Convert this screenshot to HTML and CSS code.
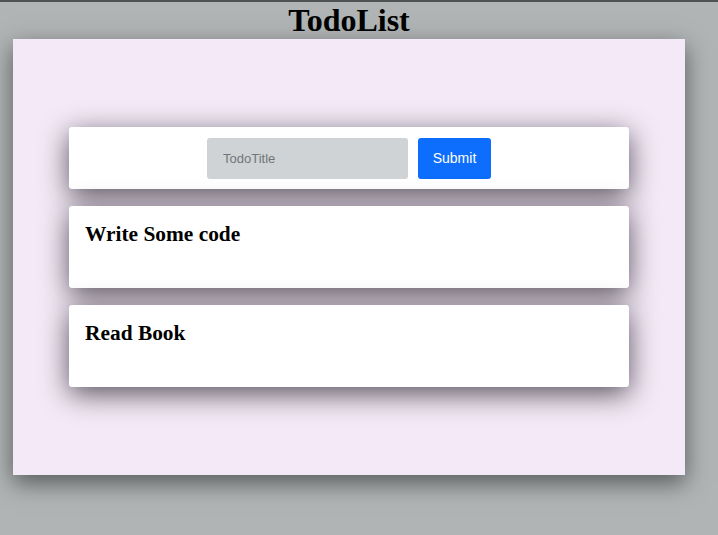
FILE: index.html
```html
<!DOCTYPE html>
<html>
<head>
<meta charset="utf-8">
<link rel="stylesheet" href="styles.css">
</head>
<body>
<div class="page">
  <h1 class="title">TodoList</h1>
  <div class="panel">
    <div class="card form-card">
      <input class="todo-input" type="text" placeholder="TodoTitle">
      <button class="submit-btn">Submit</button>
    </div>
    <div class="card todo-card"><h3 class="todo-title">Write Some code</h3></div>
    <div class="card todo-card"><h3 class="todo-title">Read Book</h3></div>
  </div>
</div>
</body>
</html>
```

FILE: styles.css
```css
html, body {
  margin: 0;
  padding: 0;
}
body {
  background: #b0b4b5;
  border-top: 2px solid #4f5354;
  height: 533px;
  overflow: hidden;
  font-family: "Liberation Serif", serif;
}
.page {
  width: 672px;
  margin-left: 13px;
}
.title {
  margin: 0;
  text-align: center;
  font-size: 32px;
  line-height: 37px;
  font-weight: bold;
  color: #000;
}
.panel {
  background: #f4eaf7;
  height: 436px;
  box-sizing: border-box;
  padding: 88px 56px 0;
  display: flex;
  flex-direction: column;
  gap: 17px;
  box-shadow: 0 8px 22px rgba(0, 0, 0, 0.5);
}
.card {
  background: #fff;
  border-radius: 3px;
  box-shadow: 0 7px 28px rgba(20, 15, 25, 0.7);
}
.form-card {
  height: 62px;
  display: flex;
  justify-content: center;
  align-items: center;
  gap: 10px;
}
.todo-input {
  width: 201px;
  height: 41px;
  box-sizing: border-box;
  border: none;
  border-radius: 3px;
  background: #d0d3d5;
  padding: 0 16px;
  font-family: "Liberation Sans", Arial, sans-serif;
  font-size: 13px;
  outline: none;
}
.todo-input::placeholder {
  color: #707579;
}
.submit-btn {
  width: 73px;
  height: 41px;
  border: none;
  border-radius: 3px;
  background: #0d6efd;
  color: #fff;
  font-family: "Liberation Sans", Arial, sans-serif;
  font-size: 14px;
  padding: 0;
}
.todo-card {
  height: 82px;
  box-sizing: border-box;
  padding: 16px;
}
.todo-title {
  margin: 0;
  font-size: 21.4px;
  line-height: 24px;
  font-weight: bold;
}
```
